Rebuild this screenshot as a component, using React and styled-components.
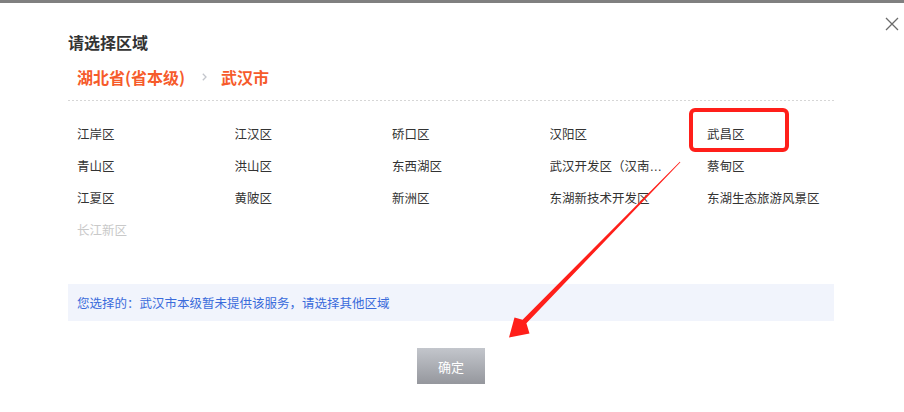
import React from "react";
import styled, { createGlobalStyle } from "styled-components";

const Global = createGlobalStyle`
  html, body { margin: 0; padding: 0; background: #fff; }
  body { font-family: "Noto Sans CJK SC", "Noto Sans", "Liberation Sans", sans-serif; }
  * { box-sizing: border-box; }
`;

const Page = styled.div`
  position: relative;
  width: 904px;
  height: 412px;
  overflow: hidden;
  background: #fff;
`;

const TopBar = styled.div`
  height: 3px;
  background: #808080;
`;

const Dialog = styled.div`
  display: flex;
  flex-direction: column;
  padding: 0 70px 0 68px;
`;

const CloseButton = styled.button`
  position: absolute;
  top: 16px;
  right: 4px;
  width: 16px;
  height: 16px;
  padding: 0;
  border: 0;
  background: transparent;
  display: flex;
  align-items: center;
  justify-content: center;
`;

const Title = styled.h2`
  margin: 28px 0 0;
  font-size: 16px;
  line-height: 22px;
  font-weight: 700;
  color: #333;
`;

const Breadcrumb = styled.div`
  display: flex;
  align-items: center;
  margin-top: 13px;
  padding-left: 9px;
  height: 22px;
`;

const Crumb = styled.span`
  font-size: 16px;
  line-height: 22px;
  font-weight: 700;
  color: #f65b2b;
`;

const Sep = styled.span`
  margin: 0 14px 0 17px;
  display: flex;
  align-items: center;
`;

const Divider = styled.div`
  margin-top: 12px;
  height: 1px;
  width: 766px;
  background-image: linear-gradient(to right, #d6d6d6 50%, transparent 50%);
  background-size: 4px 1px;
`;

const Grid = styled.div`
  margin-top: 18px;
  padding-left: 9px;
  display: grid;
  grid-template-columns: repeat(5, 157.5px);
  grid-auto-rows: 32px;
`;

const Item = styled.div`
  display: flex;
  align-items: center;
  font-size: 12.5px;
  color: ${(p) => (p.$disabled ? "#c9c9c9" : "#333")};
  min-width: 0;
`;

const ItemText = styled.span`
  display: block;
  max-width: 114px;
  white-space: nowrap;
  overflow: hidden;
  text-overflow: ellipsis;
  line-height: 20px;
  font-family: "Liberation Sans", "Noto Sans CJK SC", sans-serif;
`;

const Notice = styled.div`
  margin-top: 37px;
  width: 766px;
  height: 37px;
  background: #f1f4fc;
  display: flex;
  align-items: center;
  padding-left: 9px;
  font-size: 12.5px;
  color: #3a6bdb;
`;

const Footer = styled.div`
  display: flex;
  justify-content: center;
  width: 766px;
  margin-top: 27px;
`;

const ConfirmButton = styled.button`
  width: 68px;
  height: 36px;
  border: 0;
  padding: 0;
  background: linear-gradient(to bottom, #c3c6cc, #95979d);
  color: #fff;
  font-family: inherit;
  font-size: 13px;
`;

const Highlight = styled.div`
  position: absolute;
  left: 689px;
  top: 108px;
  width: 100px;
  height: 44px;
  border: 4.5px solid #ff1f1a;
  border-radius: 6px;
  pointer-events: none;
`;

const Overlay = styled.svg`
  position: absolute;
  left: 0;
  top: 0;
  pointer-events: none;
`;

const districts = [
  { name: "江岸区" },
  { name: "江汉区" },
  { name: "硚口区" },
  { name: "汉阳区" },
  { name: "武昌区" },
  { name: "青山区" },
  { name: "洪山区" },
  { name: "东西湖区" },
  { name: "武汉开发区（汉南经济开发区）" },
  { name: "蔡甸区" },
  { name: "江夏区" },
  { name: "黄陂区" },
  { name: "新洲区" },
  { name: "东湖新技术开发区" },
  { name: "东湖生态旅游风景区" },
  { name: "长江新区", disabled: true },
];

export default function App() {
  return (
    <Page>
      <Global />
      <TopBar />
      <CloseButton aria-label="关闭">
        <svg width="14" height="14" viewBox="0 0 14 14">
          <path d="M1 1 L13 13 M13 1 L1 13" stroke="#6b6b6b" strokeWidth="1.3" fill="none" />
        </svg>
      </CloseButton>
      <Dialog>
        <Title>请选择区域</Title>
        <Breadcrumb>
          <Crumb>湖北省(省本级)</Crumb>
          <Sep>
            <svg width="5" height="8" viewBox="0 0 5 8">
              <path d="M0.8 0.8 L4 4 L0.8 7.2" stroke="#c3c6cc" strokeWidth="1.3" fill="none" />
            </svg>
          </Sep>
          <Crumb>武汉市</Crumb>
        </Breadcrumb>
        <Divider />
        <Grid>
          {districts.map((d) => (
            <Item key={d.name} $disabled={d.disabled}>
              <ItemText>{d.name}</ItemText>
            </Item>
          ))}
        </Grid>
        <Notice>您选择的：武汉市本级暂未提供该服务，请选择其他区域</Notice>
        <Footer>
          <ConfirmButton>确定</ConfirmButton>
        </Footer>
      </Dialog>
      <Highlight />
      <Overlay width="904" height="412" viewBox="0 0 904 412">
        <path
          d="M680.4 162.3 L526.4 323.2 L529.5 333.5 L509 337.5 L514.5 317.5 L522.6 319.8 L679.8 161.7 Z"
          fill="#ff1f1a"
        />
      </Overlay>
    </Page>
  );
}
